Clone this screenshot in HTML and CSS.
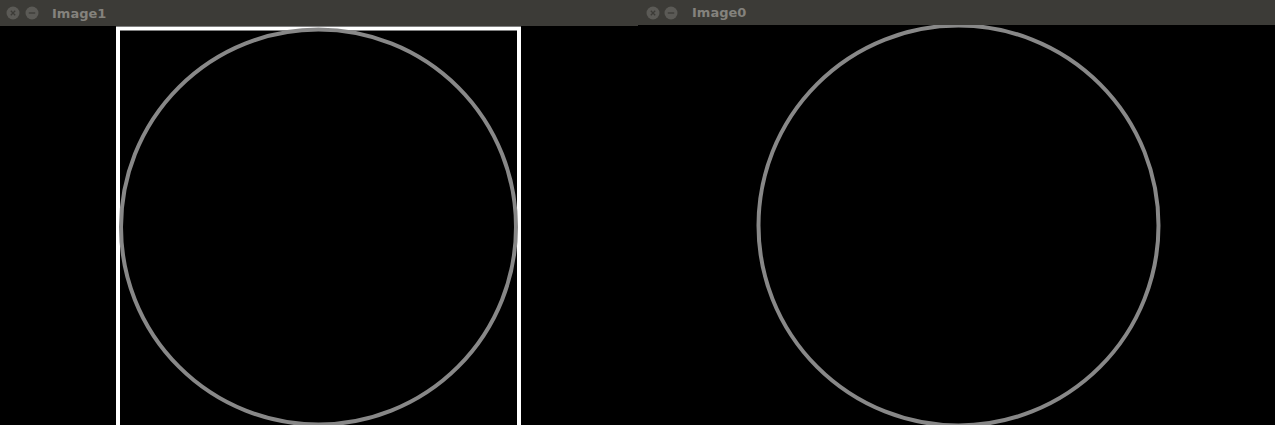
FILE: index.html
```html
<!DOCTYPE html>
<html>
<head>
<meta charset="utf-8">
<link rel="stylesheet" href="styles.css">
</head>
<body>
<div class="desk">
  <div class="win win-left">
    <div class="titlebar tb-left">
      <span class="btn"><svg width="14" height="14" viewBox="0 0 14 14"><circle cx="7" cy="7" r="6.5" fill="#5b5a56"/><path d="M4.8 4.8 L9.2 9.2 M9.2 4.8 L4.8 9.2" stroke="#3c3b37" stroke-width="1.3"/></svg></span>
      <span class="btn"><svg width="14" height="14" viewBox="0 0 14 14"><circle cx="7" cy="7" r="6.5" fill="#5b5a56"/><path d="M3.8 7 H10.2" stroke="#3c3b37" stroke-width="1.3"/></svg></span>
      <span class="title">Image1</span>
    </div>
    <svg class="canvas" width="638" height="399" viewBox="0 0 638 399">
      <rect x="118" y="2.5" width="401" height="420" fill="none" stroke="#ffffff" stroke-width="4"/>
      <circle cx="318.5" cy="201" r="197.5" fill="none" stroke="#888888" stroke-width="4"/>
    </svg>
  </div>
  <div class="win win-right">
    <div class="titlebar tb-right">
      <span class="btn"><svg width="14" height="14" viewBox="0 0 14 14"><circle cx="7" cy="7" r="6.5" fill="#5b5a56"/><path d="M4.8 4.8 L9.2 9.2 M9.2 4.8 L4.8 9.2" stroke="#3c3b37" stroke-width="1.3"/></svg></span>
      <span class="btn"><svg width="14" height="14" viewBox="0 0 14 14"><circle cx="7" cy="7" r="6.5" fill="#5b5a56"/><path d="M3.8 7 H10.2" stroke="#3c3b37" stroke-width="1.3"/></svg></span>
      <span class="title title-right">Image0</span>
    </div>
    <svg class="canvas" width="637" height="400" viewBox="0 0 637 400">
      <circle cx="320.5" cy="200.5" r="200" fill="none" stroke="#888888" stroke-width="4"/>
    </svg>
  </div>
</div>
</body>
</html>
```

FILE: styles.css
```css
html, body {
  margin: 0;
  padding: 0;
  background: #000000;
  overflow: hidden;
}
.desk {
  display: flex;
  width: 1275px;
  height: 425px;
  background: #000000;
}
.win {
  display: flex;
  flex-direction: column;
  background: #000000;
  overflow: hidden;
}
.win-left {
  width: 638px;
}
.win-right {
  width: 637px;
}
.titlebar {
  display: flex;
  align-items: center;
  background: #3c3b37;
  flex: none;
  box-sizing: border-box;
}
.tb-left {
  height: 26px;
  padding-left: 6px;
  gap: 5px;
}
.tb-right {
  height: 25px;
  padding-left: 8px;
  gap: 4px;
}
.btn {
  display: flex;
  width: 14px;
  height: 14px;
}
.title {
  font-family: "DejaVu Sans", sans-serif;
  font-weight: bold;
  font-size: 13px;
  color: #84827d;
  margin-left: 8px;
  line-height: 1;
}
.title-right {
  margin-left: 10px;
}
.canvas {
  display: block;
  flex: none;
}
```
